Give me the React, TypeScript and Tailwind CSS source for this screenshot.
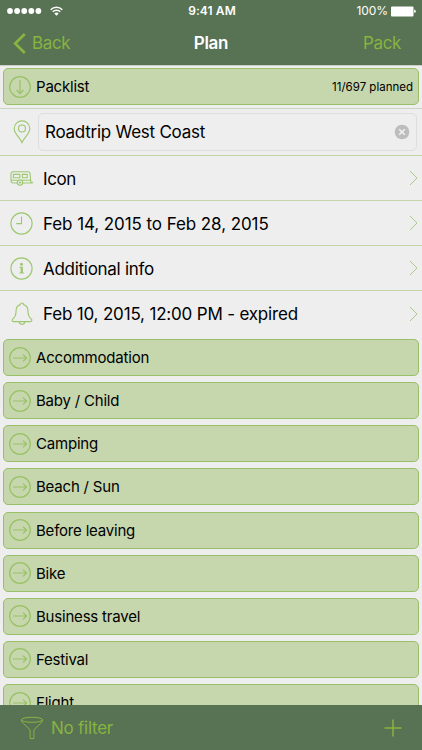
import type { ReactNode } from "react"

interface DetailRow {
  icon: ReactNode
  label: string
  className: string
  textClass: string
}

const categories = [
  "Accommodation",
  "Baby / Child",
  "Camping",
  "Beach / Sun",
  "Before leaving",
  "Bike",
  "Business travel",
  "Festival",
  "Flight",
]

const details: DetailRow[] = [
  { icon: <CamperIcon />, label: "Icon", className: "h-[45px] border-b", textClass: "tracking-[-0.4px]" },
  { icon: <ClockIcon />, label: "Feb 14, 2015 to Feb 28, 2015", className: "h-[45px] border-b", textClass: "tracking-[-0.08px]" },
  { icon: <InfoIcon />, label: "Additional info", className: "h-[45px] border-b", textClass: "tracking-[-0.28px]" },
  { icon: <BellIcon />, label: "Feb 10, 2015, 12:00 PM - expired", className: "h-[48px] pb-[3px]", textClass: "tracking-[-0.18px]" },
]

export default function App() {
  return (
    <div className="flex h-[750px] w-[422px] flex-col overflow-hidden bg-[#eeeeee] font-['Inter',sans-serif] text-black">
      <header className="h-[65px] shrink-0 bg-[#587254] text-white">
        <StatusBar />
        <NavBar />
      </header>

      <main className="min-h-0 flex-1 overflow-hidden border-t border-[#c9cfc5]">
        <div className="h-[43px] border-b border-[#cbd3c1] px-[3px] pt-[2px]">
          <Card label="Packlist" down note="11/697 planned" />
        </div>

        <div className="flex h-[47px] items-center border-b border-[#bfd5a3] pr-[5px]">
          <div className="flex w-[38px] justify-center pl-[6px]">
            <PinIcon />
          </div>
          <div className="flex h-[38px] flex-1 items-center justify-between rounded-[5px] border border-[#dededf] pr-[6px] pl-[6px]">
            <span className="text-[17px] leading-none tracking-[-0.25px] whitespace-nowrap">Roadtrip West Coast</span>
            <ClearIcon />
          </div>
        </div>

        {details.map(({ icon, label, className, textClass }) => (
          <div key={label} className={`flex items-center border-[#c3d6aa] pr-[4px] ${className}`}>
            <div className="flex w-[43px] justify-center">{icon}</div>
            <span className={`flex-1 pt-[2px] text-[17px] leading-none whitespace-nowrap ${textClass}`}>{label}</span>
            <ChevronIcon />
          </div>
        ))}

        <div className="flex flex-col gap-[6.14px] px-[3px]">
          {categories.map((label) => (
            <Card key={label} label={label} />
          ))}
        </div>
      </main>

      <footer className="flex h-[45px] shrink-0 items-center bg-[#587254] pr-[20px] pl-[20px] text-[#86b440]">
        <FunnelIcon />
        <span className="ml-[7px] flex-1 pt-[2px] text-[17px] leading-none tracking-[-0.25px]">No filter</span>
        <svg width="18" height="18" viewBox="0 0 18 18" fill="none" stroke="currentColor" strokeWidth="1.5">
          <path d="M9 0.5v17M0.5 9h17" />
        </svg>
      </footer>
    </div>
  )
}

function StatusBar() {
  return (
    <div className="grid h-[22px] grid-cols-[1fr_auto_1fr] items-center px-[6px]">
      <div className="flex items-center gap-[8px] pl-px">
        <svg width="35" height="6" viewBox="0 0 35 6" fill="currentColor">
          {[3, 10.1, 17.2, 24.3, 31.4].map((cx) => (
            <circle key={cx} cx={cx} cy="3" r="2.9" />
          ))}
        </svg>
        <svg width="13" height="10" viewBox="0 0 13 10" fill="none" stroke="currentColor" strokeWidth="1.5">
          <path d="M0.7 3.7a8.2 8.2 0 0 1 11.6 0M2.7 5.8a5.4 5.4 0 0 1 7.6 0" />
          <path d="M6.5 9.8 4.3 7.5a3.1 3.1 0 0 1 4.4 0z" fill="currentColor" stroke="none" />
        </svg>
      </div>
      <span className="pl-[2px] text-[12px] leading-none font-semibold tracking-[0.1px]">9:41 AM</span>
      <div className="flex items-center justify-end gap-[3px]">
        <span className="text-[12px] leading-none tracking-[-0.1px]">100%</span>
        <svg width="25" height="11" viewBox="0 0 25 11" fill="currentColor">
          <rect width="22.5" height="10" y="0.5" rx="1" />
          <path d="M23.2 3.6q1.6 0 1.6 1.7t-1.6 1.7z" />
        </svg>
      </div>
    </div>
  )
}

function NavBar() {
  return (
    <div className="grid h-[43px] grid-cols-[1fr_auto_1fr] items-center px-[13px] text-[17px] leading-none">
      <div className="flex items-center gap-[6px] text-[#86b440]">
        <svg width="13" height="21" viewBox="0 0 13 21" fill="none" stroke="currentColor" strokeWidth="2.8">
          <path d="M11.8 1 2.2 10.5l9.6 9.5" />
        </svg>
        <span className="tracking-[-0.35px]">Back</span>
      </div>
      <h1 className="font-semibold tracking-[-0.3px]">Plan</h1>
      <span className="pr-[8px] text-right tracking-[-0.35px] text-[#86b440]">Pack</span>
    </div>
  )
}

function Card({ label, note, down = false }: { label: string; note?: string; down?: boolean }) {
  return (
    <div className="flex h-[37px] shrink-0 items-center rounded-[5px] border border-[#99bf69] bg-[#c6d6ad] pr-[5px] pl-[5px]">
      <svg
        className={down ? "rotate-90" : ""}
        width="22"
        height="22"
        viewBox="0 0 22 22"
        fill="none"
        stroke="#99c264"
        strokeWidth="1.2"
      >
        <circle cx="11" cy="11" r="10.3" />
        <path d="M4 11h13.6M14 7.6l3.6 3.4-3.6 3.4" />
      </svg>
      <span className="ml-[5px] flex-1 text-[15px] leading-none tracking-[-0.2px] whitespace-nowrap">{label}</span>
      {note && <span className="pt-[2px] text-[11.5px] leading-none">{note}</span>}
    </div>
  )
}

function ChevronIcon() {
  return (
    <svg width="9" height="16" viewBox="0 0 9 16" fill="none" stroke="#abc98a" strokeWidth="1">
      <path d="M1 1l7 7-7 7" />
    </svg>
  )
}

function PinIcon() {
  return (
    <svg width="18" height="24" viewBox="0 0 18 24" fill="none" stroke="#9dc86f" strokeWidth="1.1">
      <path d="M9 22.6C7.2 17.8 1.2 13.7 1.2 8.7a7.8 7.8 0 0 1 15.6 0c0 5-6 9.1-7.8 13.9z" />
      <circle cx="9" cy="8.5" r="3.5" />
    </svg>
  )
}

function CamperIcon() {
  return (
    <svg width="23" height="15" viewBox="0 0 23 15" fill="none" stroke="#9dc86f" strokeWidth="1.1">
      <path d="M7.4 12H3q-2 0-2-2.4V3q0-2.2 2.2-2.2h15.2q1.4 0 1.6 1.6l.9 9.6h-8.6M19.8 12h2.4v-1.4" />
      <circle cx="10" cy="11.6" r="2.7" />
      <circle cx="10" cy="11.6" r="0.6" />
      <path d="M3.4 3.4h6.4v3.4H3.4zM12.4 3.4h4.8v3.4h-4.8zM1 9.3h6.6M12.2 9.3h8.4" />
    </svg>
  )
}

function ClockIcon() {
  return (
    <svg width="23" height="23" viewBox="0 0 23 23" fill="none" stroke="#9dc86f" strokeWidth="1.1">
      <circle cx="11.5" cy="11.5" r="10.6" />
      <path d="M11.5 4.4v7.2H6.2" />
    </svg>
  )
}

function InfoIcon() {
  return (
    <svg width="23" height="23" viewBox="0 0 23 23" fill="none" stroke="#9dc86f" strokeWidth="1.1">
      <circle cx="11.5" cy="11.5" r="10.6" />
      <circle cx="11.5" cy="7.3" r="1.5" fill="#9dc86f" stroke="none" />
      <path d="M9.4 9.8h3.5v5.7h1.2v1H9.3v-1h1.3v-4.7H9.4z" fill="#9dc86f" stroke="none" />
    </svg>
  )
}

function BellIcon() {
  return (
    <svg width="22" height="24" viewBox="0 0 22 24" fill="none" stroke="#9dc86f" strokeWidth="1.1">
      <path d="M9.4 2.6a1.6 1.6 0 1 1 3.2 0c3 .8 4.3 3 4.3 6 0 5 .9 6.9 3.8 8.9.5 1.4-.2 2.1-1.5 2.1H2.8c-1.3 0-2-.7-1.5-2.1 2.9-2 3.8-3.9 3.8-8.9 0-3 1.3-5.2 4.3-6z" />
      <path d="M8.1 19.8a2.95 2.95 0 0 0 5.8 0" />
    </svg>
  )
}

function ClearIcon() {
  return (
    <svg width="16" height="16" viewBox="0 0 16 16">
      <circle cx="8" cy="8" r="7.3" fill="#bdbdbd" />
      <path d="M5.2 5.2l5.6 5.6M10.8 5.2l-5.6 5.6" stroke="#f2f2f2" strokeWidth="1.6" />
    </svg>
  )
}

function FunnelIcon() {
  return (
    <svg width="24" height="24" viewBox="0 0 24 24" fill="none" stroke="currentColor" strokeWidth="1">
      <ellipse cx="12" cy="3.8" rx="10.7" ry="2.5" />
      <path d="M1.3 4c.2 1.5 1 2.3 2.6 3.8l6.2 6v8.8h3.8v-8.8l6.2-6c1.6-1.5 2.4-2.3 2.6-3.8" />
    </svg>
  )
}
